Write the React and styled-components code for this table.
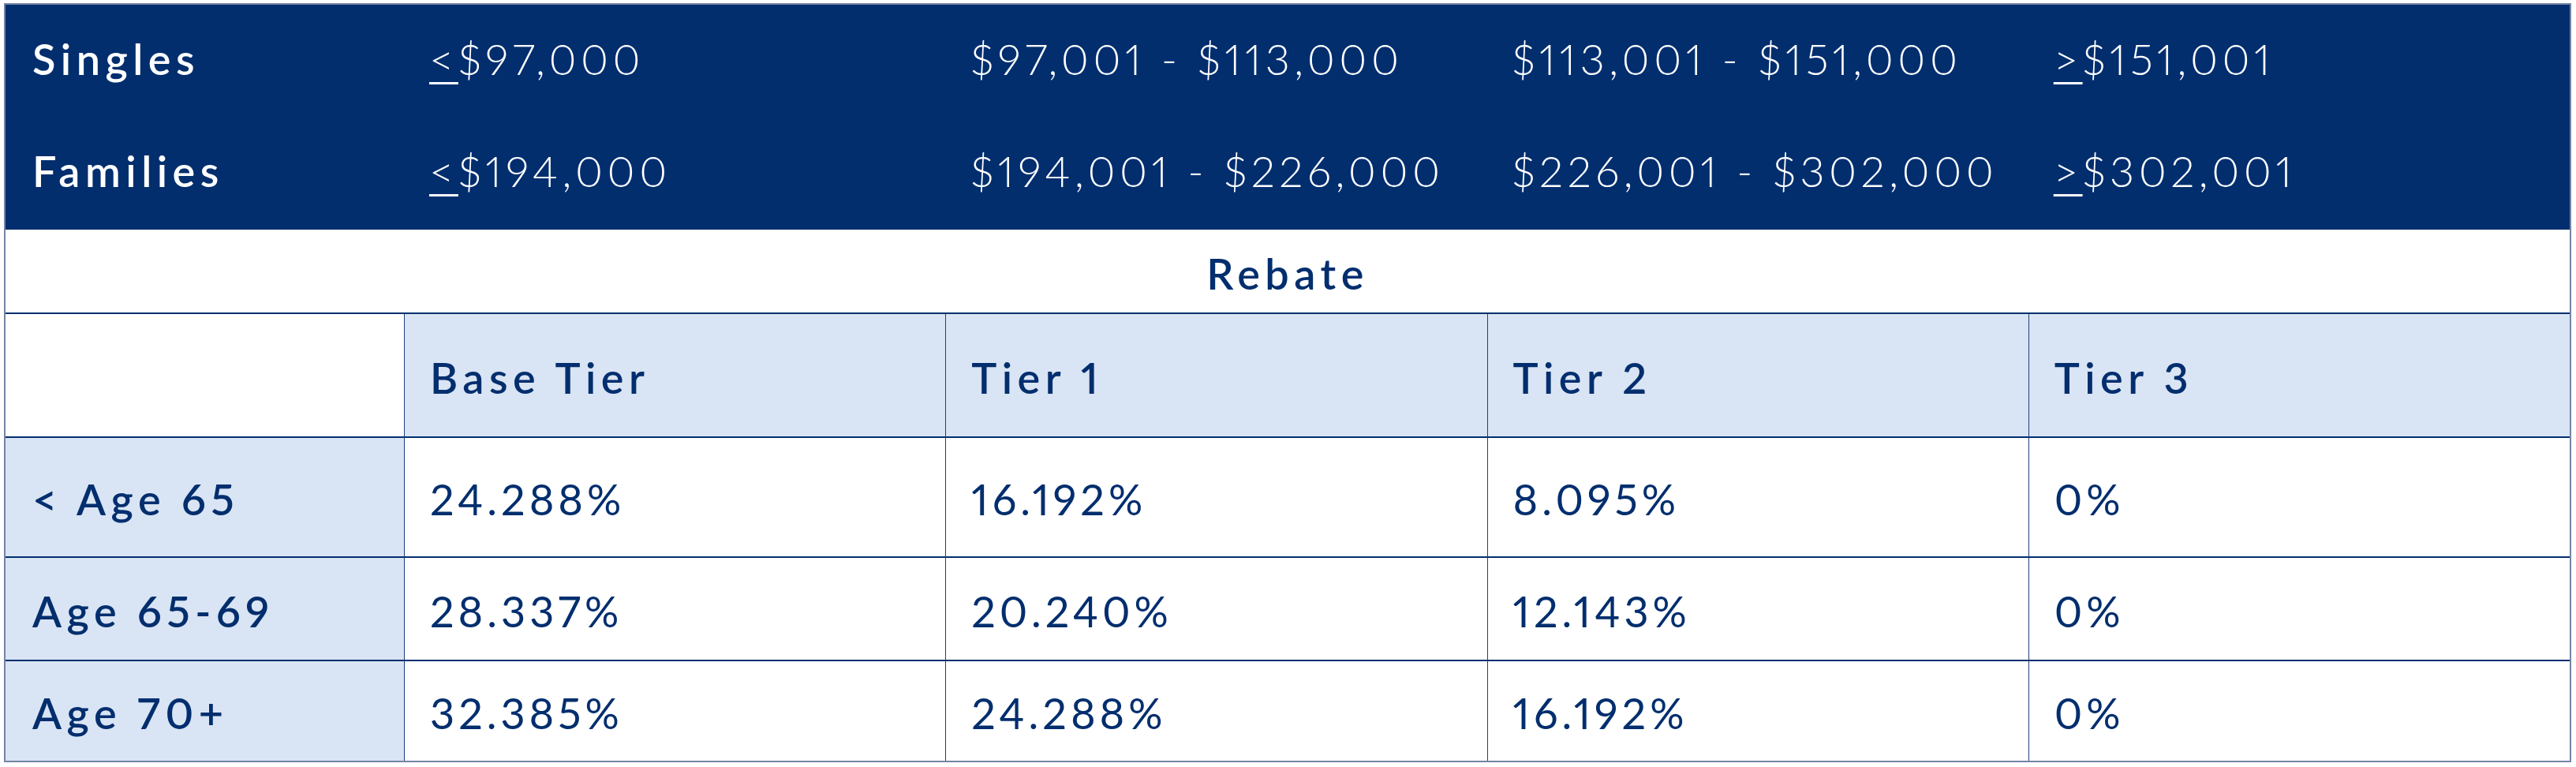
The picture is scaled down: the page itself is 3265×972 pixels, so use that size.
import React from 'react';
import styled, { createGlobalStyle } from 'styled-components';

const NAVY = '#022e6e';
const SHADE = '#d9e4f4';

const GlobalStyle = createGlobalStyle`
  html, body {
    margin: 0;
    background: #ffffff;
  }
  body {
    font-family: Lato, "Open Sans", sans-serif;
  }
`;

const Page = styled.div`
  padding: 4px 0 0 5px;
`;

const Table = styled.div`
  width: 3254px;
  box-sizing: border-box;
  border: 2px solid #7584a5;
  color: ${NAVY};
  font-size: 54px;
  font-variant-numeric: proportional-nums;
`;

const columns = '505px repeat(4, 1fr)';

const IncomeBand = styled.div`
  display: grid;
  grid-template-columns: ${columns};
  grid-auto-rows: 142.5px;
  background: ${NAVY};
  color: #ffffff;
`;

const BandCell = styled.div`
  display: flex;
  align-items: center;
  padding: 0 0 6px ${p => (p.$first ? '34px' : '32px')};
  font-weight: ${p => (p.$first ? 600 : 300)};
  letter-spacing: ${p => (p.$first ? '6.5px' : '5.5px')};
  white-space: nowrap;
`;

const Under = styled.span`
  text-decoration: underline;
  text-decoration-thickness: 3px;
  text-underline-offset: 9px;
`;

const RebateBar = styled.div`
  height: 107px;
  box-sizing: border-box;
  padding-top: 5px;
  border-bottom: 2px solid ${NAVY};
  display: flex;
  align-items: center;
  justify-content: center;
  font-weight: 600;
  letter-spacing: 6.5px;
`;

const TierGrid = styled.div`
  display: grid;
  grid-template-columns: ${columns};
  grid-template-rows: 155px 152px 131px 128px;
`;

const Cell = styled.div`
  box-sizing: border-box;
  display: flex;
  align-items: center;
  padding: 5px 0 0 ${p => (p.$first ? '34px' : '32px')};
  background: ${p => (p.$shade ? SHADE : '#ffffff')};
  border-left: ${p => (p.$first ? 'none' : '1.5px solid #22407a')};
  border-top: ${p => (p.$top ? `2px solid ${NAVY}` : 'none')};
  font-weight: ${p => (p.$bold ? 600 : 400)};
  letter-spacing: ${p => (p.$bold ? '6.5px' : '5px')};
  white-space: nowrap;
`;

const bands = [
  ['Singles', ['<', '$97,000'], '$97,001 - $113,000', '$113,001 - $151,000', ['>', '$151,001']],
  ['Families', ['<', '$194,000'], '$194,001 - $226,000', '$226,001 - $302,000', ['>', '$302,001']]
];

const tiers = ['Base Tier', 'Tier 1', 'Tier 2', 'Tier 3'];

const rates = [
  ['< Age 65', '24.288%', '16.192%', '8.095%', '0%'],
  ['Age 65-69', '28.337%', '20.240%', '12.143%', '0%'],
  ['Age 70+', '32.385%', '24.288%', '16.192%', '0%']
];

const renderBand = value =>
  Array.isArray(value) ? (
    <>
      <Under>{value[0]}</Under>
      {value[1]}
    </>
  ) : (
    value
  );

export default function App() {
  return (
    <Page>
      <GlobalStyle />
      <Table>
        <IncomeBand>
          {bands.map(row =>
            row.map((value, i) => (
              <BandCell key={row[0] + i} $first={i === 0}>
                {renderBand(value)}
              </BandCell>
            ))
          )}
        </IncomeBand>
        <RebateBar>Rebate</RebateBar>
        <TierGrid>
          <Cell $first />
          {tiers.map(t => (
            <Cell key={t} $shade $bold>
              {t}
            </Cell>
          ))}
          {rates.map(row =>
            row.map((value, i) => (
              <Cell
                key={row[0] + i}
                $first={i === 0}
                $shade={i === 0}
                $bold={i === 0}
                $top
              >
                {value}
              </Cell>
            ))
          )}
        </TierGrid>
      </Table>
    </Page>
  );
}
